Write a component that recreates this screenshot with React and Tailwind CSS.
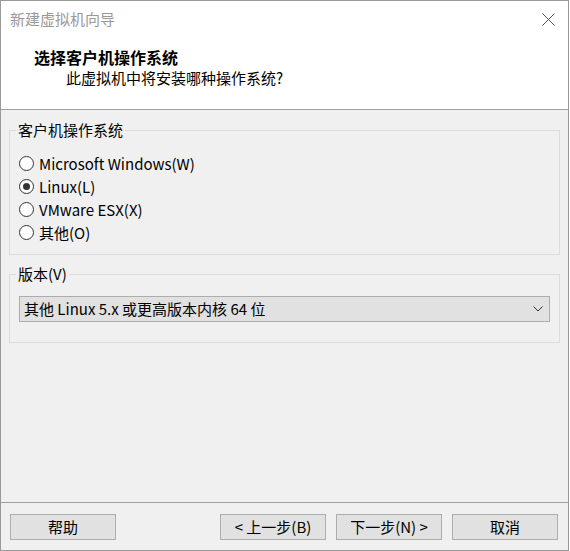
import { useState } from 'react';

const font = { fontFamily: '"Noto Sans CJK SC", "Noto Sans", sans-serif' };

const Radio = ({ label, checked, onSelect }) => (
  <label className="flex items-center h-[23px] cursor-default" onClick={onSelect}>
    <span className="w-[15px] h-[15px] rounded-full border border-[#333] bg-white flex items-center justify-center ml-[9px]">
      {checked && <span className="w-[7px] h-[7px] rounded-full bg-[#333]" />}
    </span>
    <span className="ml-[5px] text-[15px] leading-[20px] text-black">{label}</span>
  </label>
);

const Button = ({ children }) => (
  <button className="w-[106px] h-[26px] bg-[#e1e1e1] border border-[#adadad] text-[15px] leading-[20px] text-black flex items-center justify-center">
    {children}
  </button>
);

export default function App() {
  const [os, setOs] = useState('linux');

  const options = [
    { value: 'windows', label: 'Microsoft Windows(W)' },
    { value: 'linux', label: 'Linux(L)' },
    { value: 'esx', label: 'VMware ESX(X)' },
    { value: 'other', label: '其他(O)' }
  ];

  return (
    <div style={font} className="w-[569px] h-[551px] border border-[#999] bg-[#f0f0f0] flex flex-col">
      {/* 标题 + 头部 */}
      <div className="h-[109px] bg-white border-b border-[#a0a0a0] shrink-0">
        <div className="flex items-center justify-between pt-[8px] pl-[9px] pr-[13px]">
          <span className="text-[15px] leading-[20px] text-[#999]">新建虚拟机向导</span>
          <svg width="13" height="13" viewBox="0 0 13 13" className="mt-[1px]">
            <path d="M0.5 0.5 L12.5 12.5 M12.5 0.5 L0.5 12.5" stroke="#555" strokeWidth="1" fill="none" />
          </svg>
        </div>
        <div className="pl-[33px] mt-[18px] text-[16px] leading-[20px] font-bold text-black">选择客户机操作系统</div>
        <div className="pl-[65px] mt-[1px] text-[15px] leading-[20px] text-black">此虚拟机中将安装哪种操作系统?</div>
      </div>

      {/* 内容 */}
      <div className="flex-1 px-[8px] pt-[10px]">
        <fieldset className="border border-[#dcdcdc] pb-[10px]">
          <legend className="ml-[6px] px-[2px] text-[15px] leading-[20px] text-black">客户机操作系统</legend>
          <div className="pt-[12px]">
            {options.map(o => (
              <Radio key={o.value} label={o.label} checked={os === o.value} onSelect={() => setOs(o.value)} />
            ))}
          </div>
        </fieldset>

        <fieldset className="border border-[#dcdcdc] mt-[9px] pb-[20px]">
          <legend className="ml-[6px] px-[2px] text-[15px] leading-[20px] text-black">版本(V)</legend>
          <div className="mx-[9px] mt-[12px] h-[26px] bg-[#e1e1e1] border border-[#adadad] flex items-center justify-between pl-[4px] pr-[6px]">
            <span className="text-[15px] leading-[20px] text-black whitespace-pre">其他 Linux 5.x 或更高版本内核 64 位</span>
            <svg width="10" height="6" viewBox="0 0 10 6">
              <path d="M0.5 0.5 L5 5 L9.5 0.5" stroke="#333" strokeWidth="1" fill="none" />
            </svg>
          </div>
        </fieldset>
      </div>

      {/* 按钮 */}
      <div className="h-[48px] border-t border-[#a0a0a0] pt-[11px] pl-[9px] pr-[10px] flex items-start justify-between shrink-0">
        <Button>帮助</Button>
        <div className="flex gap-[10px]">
          <Button>&lt; 上一步(B)</Button>
          <Button>下一步(N) &gt;</Button>
          <Button>取消</Button>
        </div>
      </div>
    </div>
  );
}
